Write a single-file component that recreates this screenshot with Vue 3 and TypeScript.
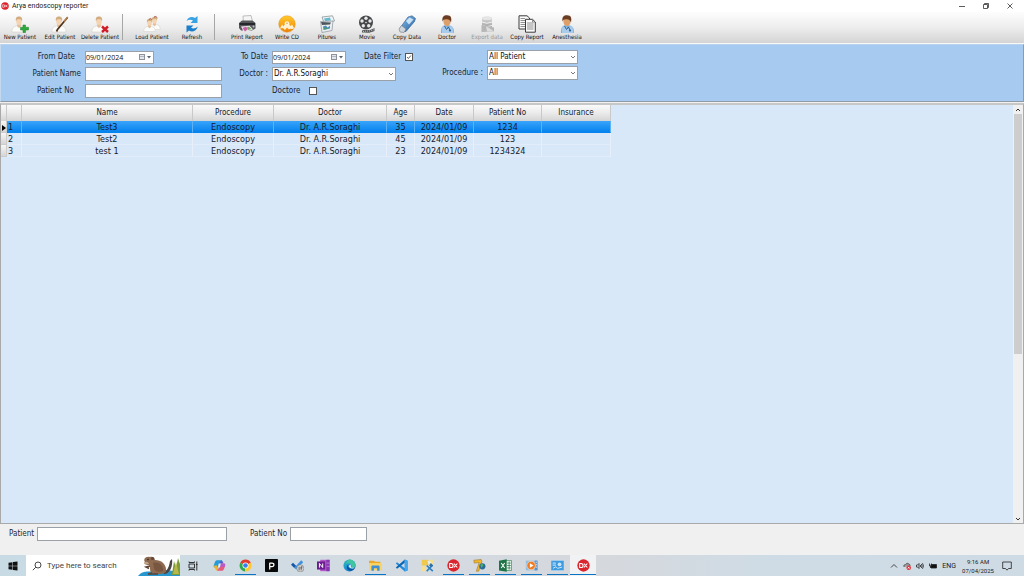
<script setup lang="ts">
import { ref } from 'vue'

interface Tool { label: string; icon: string; disabled?: boolean }
interface Row { name: string; procedure: string; doctor: string; age: number; date: string; no: string; insurance: string }
interface Task { label: string; icon: string; running?: boolean; active?: boolean }

const toolGroups: Tool[][] = [
  [
    { label: 'New Patient', icon: 'new' },
    { label: 'Edit Patient', icon: 'edit' },
    { label: 'Delete Patient', icon: 'delete' },
  ],
  [
    { label: 'Load Patient', icon: 'load' },
    { label: 'Refresh', icon: 'refresh' },
  ],
  [
    { label: 'Print Report', icon: 'print' },
    { label: 'Write CD', icon: 'cd' },
    { label: 'Pitures', icon: 'pictures' },
    { label: 'Movie', icon: 'movie' },
    { label: 'Copy Data', icon: 'usb' },
    { label: 'Doctor', icon: 'doctor' },
    { label: 'Export data', icon: 'export', disabled: true },
    { label: 'Copy Report', icon: 'copy' },
    { label: 'Anesthesia', icon: 'doctor' },
  ],
]

const columns = ['Name', 'Procedure', 'Doctor', 'Age', 'Date', 'Patient No', 'Insurance']
const rows: Row[] = [
  { name: 'Test3', procedure: 'Endoscopy', doctor: 'Dr. A.R.Soraghi', age: 35, date: '2024/01/09', no: '1234', insurance: '' },
  { name: 'Test2', procedure: 'Endoscopy', doctor: 'Dr. A.R.Soraghi', age: 45, date: '2024/01/09', no: '123', insurance: '' },
  { name: 'test 1', procedure: 'Endoscopy', doctor: 'Dr. A.R.Soraghi', age: 23, date: '2024/01/09', no: '1234324', insurance: '' },
]

const tasks: Task[] = [
  { label: 'Copilot', icon: 'copilot' },
  { label: 'Chrome', icon: 'chrome', running: true },
  { label: 'P', icon: 'papp' },
  { label: 'To Do', icon: 'todo' },
  { label: 'OneNote', icon: 'onenote' },
  { label: 'Edge', icon: 'edge' },
  { label: 'File Explorer', icon: 'folder', running: true },
  { label: 'VS Code', icon: 'vscode' },
  { label: 'Tools', icon: 'tools' },
  { label: 'DX', icon: 'dx', running: true },
  { label: 'Delphi', icon: 'seven', running: true },
  { label: 'Excel', icon: 'excel', running: true },
  { label: 'Media Player', icon: 'media', running: true },
  { label: 'Control Panel', icon: 'panel', running: true },
  { label: 'Arya', icon: 'dx', running: true, active: true },
]

const selected = ref(0)
const fromDate = ref('09/01/2024')
const toDate = ref('09/01/2024')
const dateFilter = ref(true)
const doctore = ref(false)
</script>

<template>
  <div class="window">
    <svg class="defs" aria-hidden="true">
      <defs>
        <linearGradient id="gold" x1="0" y1="0" x2="0" y2="1"><stop offset="0" stop-color="#ffc928" /><stop offset="1" stop-color="#ef8208" /></linearGradient>
        <linearGradient id="blueg" x1="0" y1="0" x2="1" y2="1"><stop offset="0" stop-color="#8fc4f0" /><stop offset="1" stop-color="#1f5d9e" /></linearGradient>
        <linearGradient id="edgeg" x1="0" y1="0" x2="1" y2="1"><stop offset="0" stop-color="#35c1b0" /><stop offset="0.5" stop-color="#1b8fd6" /><stop offset="1" stop-color="#0c59a4" /></linearGradient>
        <linearGradient id="greyg" x1="0" y1="0" x2="0" y2="1"><stop offset="0" stop-color="#e0e0e0" /><stop offset="1" stop-color="#9c9c9c" /></linearGradient>
      </defs>
      <symbol id="i-person" viewBox="0 0 18 18">
        <path d="M1 18C1 13 4 11.500 6.500 11L9 13L11.500 11C14.500 11.500 17 13 17 18Z" fill="#fbfbf9" stroke="#cfccc6" stroke-width=".6" />
        <path d="M7 9H11V11.500L9 13.500L7 11.500Z" fill="#e5bd96" />
        <ellipse cx="9" cy="6" rx="3.100" ry="4.200" fill="#f4d4b3" />
        <path d="M5.700 6C4.600 2 6.500 .5 9 .5C11.800 .5 13.300 2.500 12.300 6C11.800 3.800 10.800 3.300 9 3.600C7 3.400 6.200 4 5.700 6Z" fill="#d3ad80" />
      </symbol>
      <symbol id="i-new" viewBox="0 0 18 18">
        <use href="#i-person" width="16" height="18" />
        <path d="M12 10H14.500V12.300H17.500V15H14.500V17.500H12V15H9.500V12.300H12Z" fill="#2fa83d" stroke="#1c8329" stroke-width=".5" />
      </symbol>
      <symbol id="i-edit" viewBox="0 0 18 18">
        <use href="#i-person" width="16" height="18" />
        <path d="M16.500 2.500L6.500 14.500L5.500 16.500" stroke="#4d3220" stroke-width="1.700" fill="none" />
        <path d="M16.800 2L13 6.500" stroke="#b78145" stroke-width="1.200" />
      </symbol>
      <symbol id="i-delete" viewBox="0 0 18 18">
        <use href="#i-person" width="16" height="18" />
        <path d="M11 11.500L17 17M17 11.500L11 17" stroke="#cf1d28" stroke-width="2.400" />
      </symbol>
      <symbol id="i-load" viewBox="0 0 18 18">
        <use href="#i-person" x="5" y="0" width="13" height="16" />
        <use href="#i-person" x="0" y="2" width="13" height="16" />
        <path d="M6 4.500Q7 2.500 9 4.500M11 2Q13 .5 14.500 3" stroke="#a34e3e" stroke-width=".9" fill="none" />
      </symbol>
      <symbol id="i-refresh" viewBox="0 0 18 18">
        <path d="M3.500 6C5 1.500 9.500 1 12 3L14.500 1V8H7.500L10 5.500C8 4.300 5.500 4.500 3.500 6Z" fill="#38a3e3" />
        <path d="M14.800 11.500C13.500 16.500 8.500 17.500 6 15.500L3.500 17.500V10.500H10.500L8 12.800C10 14 13 13.500 14.800 11.500Z" fill="#1b7fcb" />
      </symbol>
      <symbol id="i-print" viewBox="0 0 18 18">
        <path d="M5 1L13 .5L14.500 7L5.500 8Z" fill="#f5f5f5" stroke="#999" stroke-width=".6" />
        <path d="M1 8L4 5.500H14.500L17.500 8V13.500L14 15.500H3L1 13Z" fill="#55575b" />
        <path d="M1.500 8H17V10H1.500Z" fill="#25272b" />
        <path d="M3 11.500L11.500 10.800L15 14.500L6 17.500Z" fill="#e8e5ea" />
        <path d="M4.500 13L8 11.800L10 14L7 16.500Z" fill="#cb5da1" /><path d="M9 12L11 11.800L13.500 14L10 15Z" fill="#79a568" />
        <circle cx="15.500" cy="11.500" r="1" fill="#b8c0c7" />
      </symbol>
      <symbol id="i-cd" viewBox="0 0 18 18">
        <circle cx="9" cy="9" r="8.300" fill="url(#gold)" stroke="#df8d21" stroke-width=".4" />
        <path d="M2 13.500L4 9.500L5.500 11.500L7 9L11 9L12.500 11L14 9.500L16 13C14 15.500 12.500 12.500 11 14.500L9 12.500L7 15L5 13Z" fill="#fff1d1" />
        <ellipse cx="9" cy="8.200" rx="2.300" ry="1.900" fill="#fff4d8" /><circle cx="9" cy="8.200" r=".8" fill="#d7a150" />
      </symbol>
      <symbol id="i-pictures" viewBox="0 0 18 18">
        <path d="M4 2L14.500 .8L16.500 6L6 7.500Z" fill="#f2f5f6" stroke="#7d8990" stroke-width=".7" />
        <path d="M6 3.500L12 2.500L13 5.500L7 6Z" fill="#65b9cc" />
        <path d="M2.500 6.500L15 6L14 15.500L4 17.500Z" fill="#e9eef0" stroke="#899298" stroke-width=".7" />
        <path d="M3 7L13 7.500L12 9.500L4 10Z" fill="#4e555a" />
        <path d="M5 11.500L8 10.500L9.500 12.500L12 10.800V13.500L5.500 15Z" fill="#4f8fb9" /><path d="M6 13L8 12L9 14L6.500 14.500Z" fill="#4e9b54" />
      </symbol>
      <symbol id="i-movie" viewBox="0 0 18 18">
        <circle cx="8" cy="7.500" r="7" fill="#46484a" />
        <g fill="#e9e9e9"><circle cx="8" cy="3.200" r="1.700" /><circle cx="12" cy="6" r="1.700" /><circle cx="10.700" cy="10.700" r="1.700" /><circle cx="5.300" cy="10.700" r="1.700" /><circle cx="4" cy="6" r="1.700" /><circle cx="8" cy="7.500" r=".8" /></g>
        <path d="M4 15.500C8 14 11 16.500 16.500 13V16C12 18.500 8 17.500 4 17.500Z" fill="#55575a" />
        <path d="M5 16.500C9 15.500 12 17 16 14.500" stroke="#ddd" stroke-dasharray="1 1" fill="none" stroke-width=".8" />
      </symbol>
      <symbol id="i-usb" viewBox="0 0 18 18">
        <path d="M2 13L10 2L14 .8L17.500 3.500L16.500 6.500L8 16.500L3.500 16.500Z" fill="url(#blueg)" stroke="#315d87" stroke-width=".6" />
        <path d="M8 6L11.500 2.500L15.500 4.500L11 9.500Z" fill="#c9e2f5" />
        <path d="M1 14L3.500 10.500L8 14L6 17.500L2 17Z" fill="#d0d5da" stroke="#727c87" stroke-width=".6" />
      </symbol>
      <symbol id="i-doctor" viewBox="0 0 18 18">
        <path d="M3 18C2.500 12 5 10.500 8 10L12 10.500C15 11.500 16 13.500 16 18Z" fill="#76addd" />
        <path d="M4 18L3.500 13L7 10.500L10 14L12 11L14.500 12L15.500 18Z" fill="#a9cced" />
        <ellipse cx="9" cy="6.500" rx="3.600" ry="4.700" fill="#dda06b" />
        <path d="M4.600 6.500C3.500 2 6 .2 9 .3C13 .2 14 3 13 7.500C12 5 11 4 8 4.200C6 4.300 5.200 5 4.600 6.500Z" fill="#6a3c23" />
        <path d="M6.500 11L8.500 14.500L10.500 12L12 15" stroke="#245587" stroke-width=".9" fill="none" /><circle cx="12" cy="15.500" r="1.100" fill="#2d5f8f" />
      </symbol>
      <symbol id="i-export" viewBox="0 0 18 18">
        <path d="M4 3C4 1 14 1 14 3V12C14 14.500 4 14.500 4 12Z" fill="url(#greyg)" />
        <ellipse cx="9" cy="3.200" rx="5" ry="1.800" fill="#e5e5e5" />
        <path d="M4 7Q9 9.500 14 7M4 10.500Q9 13 14 10.500" stroke="#f2f2f2" stroke-width="1" fill="none" />
        <path d="M3.500 10V17L16 16.500V12.500Z" fill="#b6b6b6" /><path d="M8 11L16 16.500H9Z" fill="#dedede" />
      </symbol>
      <symbol id="i-copy" viewBox="0 0 18 18">
        <path d="M1 .8H9L11.500 3V14H1Z" fill="#fafafa" stroke="#3b3b3b" stroke-width="1" />
        <path d="M2.500 3.500H7M2.500 5.500H7M2.500 7.500H7M2.500 9.500H7M2.500 11.500H7" stroke="#777" stroke-width=".8" />
        <path d="M7.500 4.300H14.500L17.300 7V17.200H7.500Z" fill="#fafafa" stroke="#3b3b3b" stroke-width="1" />
        <path d="M14.500 4.500V7H17M9 8H15.500M9 10H15.500M9 12H15.500M9 14H15.500" stroke="#777" stroke-width=".8" fill="none" />
      </symbol>

      <symbol id="i-copilot" viewBox="0 0 16 16">
        <path d="M5 1.500H10.500L12 6H8.500L6.500 10.500H2C0 10 1 7 2 5C2.800 3 3 1.500 5 1.500Z" fill="#259bd8" />
        <path d="M1.500 8H5L7 14H4.500C3 14 3 11 1.500 10.500Z" fill="#f0b429" />
        <path d="M10 1.500C12 1.500 12 4.500 13 5H9L7 11H9L7.500 6Z" fill="#5a59d6" />
        <path d="M9.500 5.500H14C16 6 15 9 14 11C13 13.500 12.500 14.500 10.500 14.500H5L7.500 10.500Z" fill="#e45c7d" />
        <path d="M9.500 5.500H13.500C15.500 6 15 8 14.500 9.500H8Z" fill="#b55bcc" />
        <path d="M7 5.500H9.500L8.500 10.500H6Z" fill="#e6eef6" />
      </symbol>
      <symbol id="i-chrome" viewBox="0 0 16 16">
        <path d="M8 8L1.500 4.500A7.300 7.300 0 0 1 14.500 4.500Z" fill="#e33b2e" />
        <path d="M8 8L1.600 4.500A7.300 7.300 0 0 0 7.500 15.300Z" fill="#2da94f" />
        <path d="M8 8L14.500 4.500A7.300 7.300 0 0 1 7.500 15.300Z" fill="#fcc934" />
        <circle cx="8" cy="8" r="3.700" fill="#fff" /><circle cx="8" cy="8" r="2.800" fill="#3b7ded" />
      </symbol>
      <symbol id="i-papp" viewBox="0 0 16 16">
        <rect x="0" y="0" width="16" height="16" rx="1" fill="#080808" />
        <path d="M5.800 13V4.500M5.800 5H8.500Q11 5 11 7.200Q11 9.500 8.500 9.500H6" stroke="#fff" stroke-width="1.500" fill="none" />
      </symbol>
      <symbol id="i-todo" viewBox="0 0 16 16">
        <path d="M0 7L2.500 4.500L6.500 8.500L4 11Z" fill="#1858a8" /><path d="M4 11L12.500 1.500L15 4L6.500 13Z" fill="#3a91e5" />
        <circle cx="11.500" cy="11.500" r="4.400" fill="#d7d7d7" stroke="#777" stroke-width=".7" />
        <path d="M10 9.500V14M12.500 14V9.500H14M11.500 11H14" stroke="#444" stroke-width=".9" fill="none" />
      </symbol>
      <symbol id="i-onenote" viewBox="0 0 16 16">
        <rect x="4" y="1" width="11.500" height="14" fill="#b657c9" /><path d="M11.500 1H15.500V15H11.500Z" fill="#8536ae" /><path d="M12 5H15.500M12 9H15.500" stroke="#e6b4ef" stroke-width=".7" />
        <rect x="0" y="3" width="10" height="10" fill="#6b1d91" /><path d="M3 10.500V5.500L7 10.500V5.500" stroke="#fff" stroke-width="1.200" fill="none" />
      </symbol>
      <symbol id="i-edge" viewBox="0 0 16 16">
        <circle cx="8" cy="8" r="7.500" fill="url(#edgeg)" />
        <path d="M8 .5C12 .5 15.500 3.500 15.500 7.500C15.500 10 13 11.200 10.500 10.800C9 10.500 10.500 9.500 10.300 8C10 5.500 7 4.500 3.500 6C5 2.500 6 1 8 .5Z" fill="#3fc5a0" />
        <path d="M6.500 7C5.500 10.500 8.500 13.500 13.500 12C11.500 14 9 14.500 7 13.500C4 12 4 8.500 6.500 7Z" fill="#0b4f99" />
        <path d="M9 6.500C10.500 8 8.800 10 10.500 10.800L14.500 10.500C12 12.500 7.500 11.500 7 8.500Z" fill="#dff1f3" />
      </symbol>
      <symbol id="i-folder" viewBox="0 0 16 16">
        <path d="M0 2H6L7.500 3.500H14V6H0Z" fill="#e9a927" /><path d="M0 5H16V14H0Z" fill="#fbd466" />
        <path d="M3 9Q3 8 4 8H12Q13 8 13 9V14.500H10V11.500H6V14.500H3Z" fill="#3f8fd2" />
      </symbol>
      <symbol id="i-vscode" viewBox="0 0 16 16">
        <path d="M12 .5L15.500 2V14L12 15.500L1 5.500L2.500 4L12 11.500Z" fill="#2489d8" /><path d="M12 .5V4.500L2.500 12L1 10.500Z" fill="#0b67b3" /><path d="M12 .5L15.500 2V14L12 15.500Z" fill="#43a7ef" />
      </symbol>
      <symbol id="i-tools" viewBox="0 0 16 16">
        <path d="M1 1H9V8H1Z" fill="#f1c94b" /><path d="M10 1H15V6H10ZM1 9H6V15H1Z" fill="#f6df8e" />
        <path d="M7 8L14.500 15M14 7.500L7 15" stroke="#2f80bd" stroke-width="2" /><path d="M10 8L12 5L15 8L13 10Z" fill="#2d6fa6" /><path d="M8 2L13 4L9 6Z" fill="#e6f0f7" />
      </symbol>
      <symbol id="i-dx" viewBox="0 0 16 16">
        <circle cx="8" cy="8" r="7.600" fill="#dc242d" />
        <path d="M3.300 5.500V10.500H5Q7.500 10.500 7.500 8Q7.500 5.500 5 5.500ZM8.500 5.500L12.700 10.500M12.700 5.500L8.500 10.500" stroke="#fff" stroke-width="1.300" fill="none" />
      </symbol>
      <symbol id="i-seven" viewBox="0 0 16 16">
        <path d="M1 1.500L10 .5L11 3L7 15H4L7.500 4.500L1.500 5Z" fill="#f0b42d" stroke="#8c6e2a" stroke-width=".6" />
        <circle cx="11.500" cy="9" r="3.800" fill="#286d98" /><path d="M9 7Q11.500 5 13 7.500L10.500 11Z" fill="#54ad64" />
      </symbol>
      <symbol id="i-excel" viewBox="0 0 16 16">
        <path d="M8 2H15.500V14H8Z" fill="#f3f9f5" stroke="#1e7446" stroke-width=".8" /><path d="M10 5H14.500M10 8H14.500M10 11H14.500M12.500 3V13" stroke="#1e7446" stroke-width=".9" />
        <path d="M0 2L9.500 .3V15.700L0 14Z" fill="#1e7446" /><path d="M2.700 5L7 11M7 5L2.700 11" stroke="#fff" stroke-width="1.300" />
      </symbol>
      <symbol id="i-media" viewBox="0 0 16 16">
        <path d="M1 2H15V14H1Z" fill="#92bfe4" /><path d="M12 2H15.500V14H12Z" fill="#5e92c2" /><path d="M13 4H15M13 7H15M13 10H15" stroke="#e3eef8" />
        <circle cx="7.500" cy="8" r="5.300" fill="#ef7c22" stroke="#f8e6d5" stroke-width=".8" /><path d="M6 5.200L10.500 8L6 10.800Z" fill="#fff" />
      </symbol>
      <symbol id="i-panel" viewBox="0 0 16 16">
        <rect x="0" y="2" width="16" height="12" fill="#3f9be0" stroke="#a7d0ef" stroke-width=".8" />
        <path d="M2 5H6M2 7.500H6" stroke="#fff" /><circle cx="10.500" cy="6.500" r="2.300" fill="#c6e5fa" /><path d="M2.500 11.500L6 9.500L8 11.500L13.500 10" stroke="#e6f4ff" fill="none" />
      </symbol>
    </svg>

    <header class="titlebar">
      <svg class="logo"><use href="#i-dx" /></svg>
      <h1>Arya endoscopy reporter</h1>
      <div class="winbuttons">
        <button aria-label="Minimize"><svg viewBox="0 0 8 8"><path d="M1 4.500H7" /></svg></button>
        <button aria-label="Restore"><svg viewBox="0 0 8 8"><path d="M1.500 2.500H5.500V6.500H1.500ZM2.500 2.500V1.500H6.500V5.500H5.500" /></svg></button>
        <button aria-label="Close"><svg viewBox="0 0 8 8"><path d="M1.500 1.500L6.500 6.500M6.500 1.500L1.500 6.500" /></svg></button>
      </div>
    </header>

    <nav class="toolbar">
      <div v-for="(group, g) in toolGroups" :key="g" class="group">
        <button v-for="tool in group" :key="tool.label" class="tool" :disabled="tool.disabled">
          <svg><use :href="'#i-' + tool.icon" /></svg>
          <span>{{ tool.label }}</span>
        </button>
      </div>
    </nav>

    <form class="filters" @submit.prevent>
      <div class="fields patient">
        <label for="from">From Date</label>
        <span class="datebox">
          <input id="from" v-model="fromDate" type="text" />
          <button type="button" aria-label="Pick from date"><svg viewBox="0 0 12 8"><rect x=".5" y="1.500" width="5" height="5" fill="#e3e7ec" stroke="#8d939c" /><path d="M1 3.500H5" stroke="#b1b7bf" /><path d="M8 3H12L10 5.500Z" fill="#566270" /></svg></button>
        </span>
        <label for="pname">Patient Name</label>
        <input id="pname" class="box" type="text" />
        <label for="pno">Patient No</label>
        <input id="pno" class="box" type="text" />
      </div>

      <div class="fields visit">
        <label for="to">To Date</label>
        <span class="datebox">
          <input id="to" v-model="toDate" type="text" />
          <button type="button" aria-label="Pick to date"><svg viewBox="0 0 12 8"><rect x=".5" y="1.500" width="5" height="5" fill="#e3e7ec" stroke="#8d939c" /><path d="M1 3.500H5" stroke="#b1b7bf" /><path d="M8 3H12L10 5.500Z" fill="#566270" /></svg></button>
        </span>
        <label class="check filter">Date Filter <input v-model="dateFilter" type="checkbox" /></label>
        <label for="doctor">Doctor :</label>
        <select id="doctor" class="box"><option>Dr. A.R.Soraghi</option></select>
        <label class="check doctore">Doctore <input v-model="doctore" type="checkbox" /></label>
      </div>

      <div class="fields kind">
        <select aria-label="Patient group" class="box group-select"><option>All Patient</option></select>
        <label for="procedure">Procedure :</label>
        <select id="procedure" class="box"><option>All</option></select>
      </div>
    </form>

    <main class="grid">
      <div class="sheet">
        <table>
          <colgroup>
            <col class="c-mark" /><col class="c-num" /><col class="c-name" /><col class="c-proc" /><col class="c-doc" />
            <col class="c-age" /><col class="c-date" /><col class="c-no" /><col class="c-ins" />
          </colgroup>
          <thead>
            <tr><th></th><th></th><th v-for="c in columns" :key="c">{{ c }}</th></tr>
          </thead>
          <tbody>
            <tr v-for="(row, i) in rows" :key="row.no" :class="{ selected: selected === i }" @click="selected = i">
              <td class="mark"><svg v-if="selected === i" viewBox="0 0 4 6"><path d="M0 0L4 3L0 6Z" /></svg></td>
              <td class="num">{{ i + 1 }}</td>
              <td>{{ row.name }}</td>
              <td>{{ row.procedure }}</td>
              <td>{{ row.doctor }}</td>
              <td>{{ row.age }}</td>
              <td>{{ row.date }}</td>
              <td>{{ row.no }}</td>
              <td>{{ row.insurance }}</td>
            </tr>
          </tbody>
        </table>
      </div>
      <div class="scrollbar">
        <button aria-label="Scroll up"><svg viewBox="0 0 8 8"><path d="M2 5L4 3L6 5" /></svg></button>
        <div class="track"><div class="thumb"></div></div>
        <button aria-label="Scroll down"><svg viewBox="0 0 8 8"><path d="M2 3L4 5L6 3" /></svg></button>
      </div>
    </main>

    <footer class="summary">
      <label for="cur">Patient</label>
      <input id="cur" class="box wide" type="text" />
      <label for="curno">Patient No</label>
      <input id="curno" class="box" type="text" />
    </footer>

    <div class="taskbar">
      <button class="start" aria-label="Start"><svg viewBox="0 0 10 10"><path d="M.5 1.800L4.500 1.200V4.700H.5ZM5 1.100L9.500 .5V4.700H5ZM.5 5.200H4.500V8.800L.5 8.200ZM5 5.200H9.500V9.500L5 8.900Z" /></svg></button>
      <div class="search">
        <svg class="glass" viewBox="0 0 10 10"><circle cx="6" cy="4" r="3" /><path d="M3.800 6.200L.8 9.200" /></svg>
        <input type="text" aria-label="Search" placeholder="Type here to search" />
        <svg class="beaver" viewBox="0 0 42 20">
          <path d="M0 20C4 14 14 15 18 17C25 12 36 15 42 16V20Z" fill="#2697cf" />
          <path d="M34 18L36 5L38 12L40 2L42 8V19H33Z" fill="#7d9c37" /><path d="M35 18L38 6L41 18Z" fill="#b8b849" />
          <path d="M25 16C29 16 31 11 32 5L34 3C35 10 32 18 26 18Z" fill="#4b4644" />
          <path d="M7 6C5 4 7 0 12 1C14 0 17 1 17 4C24 4 29 9 28 16C24 19 17 18 14 17C11 16 13 11 11 9C8 9 5 8 7 6Z" fill="#8d6a50" />
          <path d="M15 7C21 5 26 10 25 15C21 17 16 15 16 12Z" fill="#79563f" /><path d="M7 6Q10 5 11 8Q7 9 6 7Z" fill="#c1a183" />
          <circle cx="10" cy="3.500" r=".8" fill="#2c2019" /><circle cx="14.500" cy="2.500" r="1.500" fill="#654532" />
          <path d="M12 10L8 11L11 12.500M14 17L10 18L20 18" stroke="#5f4333" stroke-width="1.500" fill="none" />
        </svg>
      </div>
      <button class="view" aria-label="Task view"><svg viewBox="0 0 10 10"><path d="M1 3H6.500V7H1ZM1 .5V1.500H6.500V.5M1 9.500V8.500H6.500V9.500M8.800 .5V9.500M8 3.500H9.500" /></svg></button>
      <div class="apps">
        <button v-for="(task, i) in tasks" :key="i" :aria-label="task.label" :class="{ running: task.running, active: task.active }">
          <svg><use :href="'#i-' + task.icon" /></svg>
        </button>
      </div>
      <div class="tray">
        <svg viewBox="0 0 8 8"><path d="M1 5.500L4 2.500L7 5.500" /></svg>
        <svg viewBox="0 0 8 8"><path d="M1 5Q0 2.500 2.500 2.500Q4 0 6 2Q7.500 2.500 7 4" fill="#999" stroke="#555" /><circle cx="5.700" cy="5.700" r="2.300" fill="#e0313a" stroke="none" /><path d="M4.800 4.800L6.600 6.600M6.600 4.800L4.800 6.600" stroke="#fff" /></svg>
        <svg viewBox="0 0 8 8"><path d="M.5 3H1.500L3 1.500V6.500L1.500 5H.5ZM4.300 3Q5 4 4.300 5M5.400 2Q6.700 4 5.400 6M6.500 1.200Q8.400 4 6.500 6.800" /></svg>
        <svg viewBox="0 0 8 8"><path d="M2 2.500H7.500V6H2Z" fill="#111" /><path d="M.5 1.500V4H2.500V1.500M1.500 4V6" /></svg>
        <span>ENG</span>
        <span class="clock"><span>9:16 AM</span><span>07/04/2025</span></span>
        <button aria-label="Notifications"><svg viewBox="0 0 10 10"><path d="M.7 1H9.300V7.500H6.500L5 9.200L3.500 7.500H.7Z" /></svg></button>
      </div>
    </div>
  </div>
</template>

<style>
body { margin: 0; }
</style>

<style scoped>
* { box-sizing: border-box; }
.window {
  display: flex; flex-direction: column; min-height: 100vh;
  background: #f0f0f0; color: #1b2733; overflow: hidden;
  font-family: "DejaVu Sans Condensed", "DejaVu Sans", sans-serif; font-size: 8px; line-height: 12px;
}
.defs { position: absolute; width: 0; height: 0; }
button, input, select { font: inherit; color: inherit; margin: 0; padding: 0; border: 0; background: none; border-radius: 0; }
button { display: flex; align-items: center; justify-content: center; }
svg { display: block; flex: none; }

.titlebar { display: flex; align-items: center; height: 12px; background: #fff; padding-left: 1px; }
.logo { width: 8px; height: 8px; margin-right: 3px; }
h1 { margin: 0; font: 7px/12px Roboto, "Open Sans", sans-serif; color: #222; }
.winbuttons { display: flex; margin-left: auto; }
.winbuttons button { width: 24px; height: 12px; }
.winbuttons button:last-child { margin-right: 2px; }
.winbuttons svg { width: 8px; height: 8px; fill: none; stroke: #333; stroke-width: .8; }

.toolbar { display: flex; height: 32px; border-bottom: 1px solid #f8f8f8; background: linear-gradient(#fdfdfd, #ededed 50%, #d4d4d4); }
.group { display: flex; }
.group + .group { margin-left: 2px; }
.group + .group::before { content: ""; width: 1px; height: 26px; margin-top: 2px; margin-right: 9px; background: #a6a6a6; }
.group:last-child::before { margin-right: 12px; }
.tool { flex-direction: column; justify-content: flex-start; width: 40px; padding-top: 3px; font-size: 6px; line-height: 8px; color: #111; white-space: nowrap; }
.tool svg { width: 18px; height: 18px; }
.tool:disabled { color: #999; }

.filters { display: flex; align-items: flex-start; height: 58px; padding-top: 5px; background: #a6caf0; border-top: 1px solid #b9d3ee; border-bottom: 1px solid #8f9aa6; border-right: 1px solid #999; border-left: 1px solid #c4d8ee; }
.fields { display: grid; align-items: center; grid-auto-rows: 14px; row-gap: 3px; column-gap: 4px; }
.patient { grid-template-columns: 80px 137px; }
.patient label { text-align: right; }
.patient label:first-child { padding-right: 6px; }
.patient label[for="pno"] { padding-right: 7px; }
.visit { grid-template-columns: 46px 74px 46px 29px; }
.visit > label[for] { text-align: right; }
.kind { grid-template-columns: 54px 91px; row-gap: 2px; }
.kind label { text-align: right; }
.box { width: 100%; height: 14px; border: 1px solid #9aa0a8; background: #fff; padding: 0 2px; color: #111; outline: none; }
select.box {
  appearance: none; padding: 0 10px 0 1px;
  background: #fff url("data:image/svg+xml,%3Csvg xmlns='http://www.w3.org/2000/svg' viewBox='0 0 8 8'%3E%3Cpath d='M2 3L4 5L6 3' fill='none' stroke='%23555' stroke-width='.8'/%3E%3C/svg%3E") right 0 center / 8px 8px no-repeat;
}
.datebox { display: flex; height: 13px; width: 69px; border: 1px solid #9aa0a8; background: #fff; }
.visit .datebox { width: 74px; }
.datebox input { flex: 1; min-width: 0; font: 7px/11px "Open Sans", "Noto Sans", sans-serif; color: #111; outline: none; }
.datebox button { width: 16px; }
.datebox svg { width: 12px; height: 8px; }
.check { display: flex; align-items: center; white-space: nowrap; }
.filter { grid-column: 3 / 5; padding-left: 14px; gap: 4px; }
.visit #doctor { grid-column: 2 / 4; }
.doctore { grid-column: 2; grid-row: 3; gap: 9px; }
input[type="checkbox"] { appearance: none; width: 8px; height: 8px; border: 1px solid #555; background: #fff; }
input[type="checkbox"]:checked { background: #fff url("data:image/svg+xml,%3Csvg xmlns='http://www.w3.org/2000/svg' viewBox='0 0 8 8'%3E%3Cpath d='M1.500 4L3.200 6L6.500 2' fill='none' stroke='%23333' stroke-width='1'/%3E%3C/svg%3E") center / 6px 6px no-repeat; }
.group-select { grid-column: 2; }

.grid { display: flex; flex: 1; margin-top: 1px; border: 1px solid #a9a9a9; border-top: 2px solid #c7c7c7; background: #d9e8f9; }
.sheet { flex: 1; }
table { table-layout: fixed; width: 610px; border-collapse: separate; border-spacing: 0; text-align: center; color: #14202c; }
.c-mark { width: 6px; } .c-num { width: 15px; } .c-name { width: 171px; } .c-proc { width: 81px; } .c-doc { width: 113px; }
.c-age { width: 28px; } .c-date { width: 59px; } .c-no { width: 68px; } .c-ins { width: 69px; }
th { height: 16px; padding: 0 0 2px; font-size: 8px; line-height: 11px; font-weight: normal; border-right: 1px solid #c9c9c9; background: linear-gradient(#fafafa, #ebebeb 50%, #d4d4d4); }
td { height: 12px; padding: 2px 0 0; font-size: 9px; line-height: 9px; border-right: 1px solid #e7effa; border-bottom: 1px solid #e3edf9; white-space: nowrap; }
td.mark { background: linear-gradient(#f6f6f6, #d5d5d5); border-color: #ccc; }
td.mark svg { width: 4px; height: 6px; margin-left: 1px; fill: #000; }
td.num { text-align: left; padding-left: 1px; }
.selected td:not(.mark) { background: linear-gradient(#39a4fb, #0583ee); border-bottom-color: #0583ee; border-right-color: #5cb2f7; }

.scrollbar { display: flex; flex-direction: column; width: 10px; background: #f0f0f0; }
.scrollbar button { height: 9px; }
.scrollbar svg { width: 8px; height: 8px; fill: none; stroke: #333; stroke-width: 1; }
.track { flex: 1; }
.thumb { height: 60%; margin: 0 1px; background: #cdcdcd; }

.summary { display: flex; align-items: center; gap: 3px; height: 31px; padding: 0 9px 11px; }
.summary .box { width: 77px; }
.summary .wide { width: 190px; margin-right: 20px; }

.taskbar { display: flex; height: 21px; background: linear-gradient(90deg, #c8dbe5, #d3dbe2 35%, #d5d8dd 60%, #cfdce5 75%, #cfdbe4); font-family: Roboto, "Open Sans", sans-serif; color: #1c1c1c; }
.start { width: 26px; }
.start svg { width: 10px; height: 10px; fill: #111; }
.search { display: flex; align-items: center; width: 154px; background: #fff; padding-left: 6px; }
.glass { width: 10px; height: 10px; fill: none; stroke: #333; stroke-width: .9; }
.search input { flex: 1; min-width: 0; margin-left: 5px; font-size: 8px; outline: none; }
.search input::placeholder { color: #444; opacity: 1; }
.beaver { width: 42px; height: 20px; align-self: flex-end; }
.view { width: 26px; }
.view svg { width: 10px; height: 10px; fill: none; stroke: #222; stroke-width: .9; }
.apps { display: flex; }
.apps button { width: 26px; border-bottom: 1px solid transparent; }
.apps svg { width: 13px; height: 13px; }
.apps .running { background: linear-gradient(#0a74c4, #0a74c4) center bottom / 21px 1px no-repeat; }
.apps .active { background: linear-gradient(#0a74c4, #0a74c4) center bottom / 26px 1px no-repeat, #f1f2f3; }
.tray { display: flex; align-items: center; gap: 5px; margin-left: auto; padding-right: 12px; font-size: 7px; }
.tray svg { width: 8px; height: 8px; fill: none; stroke: #222; stroke-width: .8; }
.tray button svg { width: 10px; height: 10px; }
.clock { display: flex; flex-direction: column; align-items: center; line-height: 9px; font-size: 6px; margin: 0 3px 0 1px; }
</style>
